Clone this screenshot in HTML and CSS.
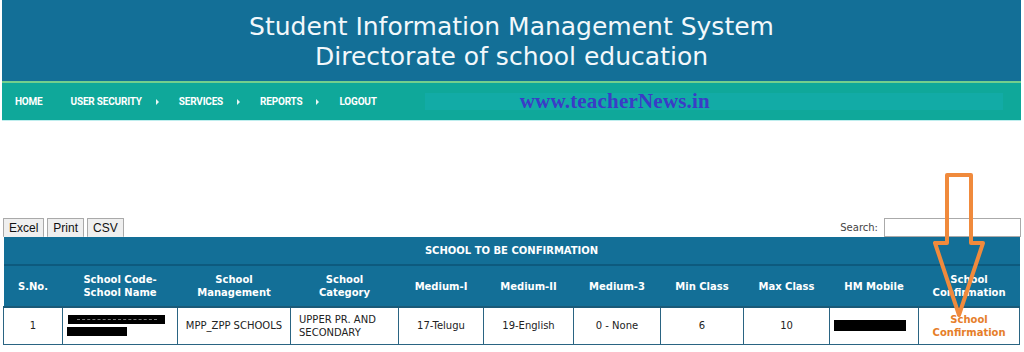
FILE: index.html
```html
<!DOCTYPE html>
<html>
<head>
<meta charset="utf-8">
<link rel="stylesheet" href="styles.css">
</head>
<body>
<div class="page">
  <header class="banner">
    <h1>Student Information Management System<br>Directorate of school education</h1>
  </header>
  <nav class="nav">
    <a class="nav-item">HOME</a>
    <a class="nav-item has-sub">USER SECURITY</a>
    <a class="nav-item has-sub">SERVICES</a>
    <a class="nav-item has-sub">REPORTS</a>
    <a class="nav-item">LOGOUT</a>
    <div class="watermark-box"><span class="watermark">www.teacherNews.in</span></div>
  </nav>
  <div class="spacer"></div>
  <div class="toolbar">
    <div class="buttons">
      <button class="btn">Excel</button>
      <button class="btn">Print</button>
      <button class="btn">CSV</button>
    </div>
    <label class="search">Search: <input type="text"></label>
  </div>
  <div class="table-wrap">
    <table class="grid">
      <colgroup>
        <col style="width:59px"><col style="width:115px"><col style="width:113px"><col style="width:108px">
        <col style="width:85px"><col style="width:90px"><col style="width:87px"><col style="width:83px">
        <col style="width:86px"><col style="width:89px"><col style="width:101px">
      </colgroup>
      <thead>
        <tr><th colspan="11" class="caption">SCHOOL TO BE CONFIRMATION</th></tr>
        <tr class="heads">
          <th>S.No.</th>
          <th>School Code-<br>School Name</th>
          <th>School<br>Management</th>
          <th>School<br>Category</th>
          <th>Medium-I</th>
          <th>Medium-II</th>
          <th>Medium-3</th>
          <th>Min Class</th>
          <th>Max Class</th>
          <th>HM Mobile</th>
          <th>School<br>Confirmation</th>
        </tr>
      </thead>
      <tbody>
        <tr>
          <td>1</td>
          <td class="redact-cell"><span class="redact r1"><span class="dots"></span></span><span class="redact r2"></span></td>
          <td>MPP_ZPP SCHOOLS</td>
          <td class="left">UPPER PR. AND<br>SECONDARY</td>
          <td>17-Telugu</td>
          <td>19-English</td>
          <td>0 - None</td>
          <td>6</td>
          <td>10</td>
          <td class="redact-cell"><span class="redact r3"></span></td>
          <td><a class="confirm">School<br>Confirmation</a></td>
        </tr>
      </tbody>
    </table>
    <svg class="arrow" width="64" height="150" viewBox="0 0 64 150">
      <path d="M14 4 H38 V72 H50 L26 144 L2 72 H14 Z" fill="none" stroke="#f08a3c" stroke-width="4" stroke-linejoin="round"/>
    </svg>
  </div>
</div>
</body>
</html>
```
FILE: styles.css
```css
* { box-sizing: border-box; }
html, body { margin: 0; padding: 0; background: #fff; }
body { width: 1024px; height: 352px; overflow: hidden; font-family: "DejaVu Sans", Verdana, sans-serif; }
.page { width: 1019px; margin-left: 2px; position: relative; }

.banner { height: 81px; background: #136f97; display: flex; align-items: center; justify-content: center; }
.banner h1 { margin: 0; padding-top: 2px; font-weight: normal; color: #f2f8fb; font-size: 25px; line-height: 30px; text-align: center; font-family: "DejaVu Sans", Verdana, sans-serif; }

.nav { height: 40px; background: #0fa89a; border-top: 2px solid #74cf8c; border-bottom: 1px solid #bfeeee; display: flex; align-items: center; padding-left: 13px; }
.nav-item { flex-shrink: 0; white-space: nowrap; color: #fff; font-family: Roboto, "Liberation Sans", sans-serif; font-weight: 700; font-size: 10px; letter-spacing: -0.2px; margin-right: 20px; display: flex; align-items: center; }
.nav-item:first-child { margin-right: 28px; }
.nav-item.has-sub::after { content: ""; margin-left: 14px; border-left: 3px solid #e8f6f4; border-top: 3px solid transparent; border-bottom: 3px solid transparent; }
.watermark-box { flex-shrink: 0; margin-left: 28px; width: 578px; height: 17px; background: #12aba6; display: flex; align-items: center; padding-left: 95px; }
.watermark { font-family: "Liberation Serif", "DejaVu Serif", serif; font-weight: 700; font-size: 21px; color: #3a3cc6; letter-spacing: 0.2px; }

.spacer { height: 97px; }

.toolbar { display: flex; justify-content: space-between; align-items: center; height: 19px; padding-left: 1px; }
.buttons { display: flex; gap: 3px; }
.btn { font-family: "Liberation Sans", Arial, sans-serif; font-size: 12px; height: 19px; padding: 0 5px; background: #efefef; border: 1px solid #a9a9a9; border-bottom: none; color: #111; border-radius: 1px; }
.search { font-family: "DejaVu Sans", Verdana, sans-serif; font-size: 10px; color: #444; display: flex; align-items: center; gap: 6px; }
.search input { width: 137px; height: 19px; border: 1px solid #aaa; margin: 0; }

.table-wrap { position: relative; margin-left: 1px; }
.grid { border-collapse: collapse; table-layout: fixed; width: 1016px; font-family: "DejaVu Sans", Verdana, sans-serif; }
.grid th { background: #136f97; color: #fff; font-weight: 700; font-size: 10px; line-height: 13px; text-align: center; }
.grid .caption { height: 28px; border-bottom: 2px solid #0d5a7e; font-size: 10px; letter-spacing: 0; }
.grid .heads th { height: 42px; padding: 0 2px; border-bottom: 2px solid #1a5a78; }
.grid td { height: 37px; border: 1px solid #2a6482; border-top: none; font-size: 10px; line-height: 13px; color: #222; text-align: center; padding: 0 4px; }
.grid td.left { text-align: left; padding-left: 8px; }
.redact-cell { position: relative; }
.redact { display: block; background: #000; }
.r1 { width: 97px; height: 9px; margin: 0 0 3px 1px; display: flex; align-items: center; justify-content: center; }
.dots { width: 80px; border-top: 1px dashed #777; }
.r2 { width: 60px; height: 9px; }
.r3 { width: 72px; height: 11px; margin-left: 0; }
.confirm { color: #e67e2a; font-weight: 700; font-size: 10px; line-height: 12px; }

.arrow { position: absolute; left: 930px; top: -66px; }
```
